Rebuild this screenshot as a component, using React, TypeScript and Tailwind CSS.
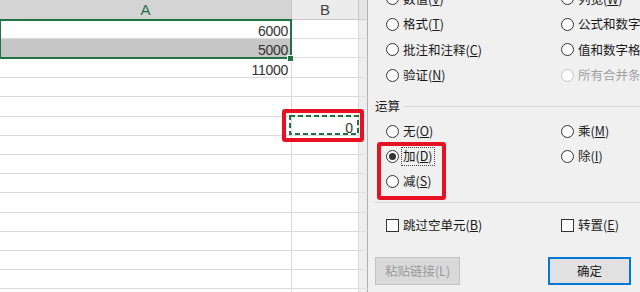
import React from "react";

const rowHeights = [19, 19, 20, 19, 20, 19, 19, 19, 19, 20, 19, 19, 19, 19, 6];

function Label({ text, k, disabled }: { text: string; k: string; disabled?: boolean }) {
  return (
    <span className={disabled ? "text-[#a0a0a0]" : "text-[#1a1a1a]"}>
      {text}(<span className="underline underline-offset-[1px]">{k}</span>)
    </span>
  );
}

function Radio({
  text,
  k,
  checked,
  disabled,
  focus,
}: {
  text: string;
  k: string;
  checked?: boolean;
  disabled?: boolean;
  focus?: boolean;
}) {
  return (
    <div className="flex items-center whitespace-nowrap">
      <div
        className={
          "w-[13px] h-[13px] shrink-0 rounded-full border bg-white flex items-center justify-center " +
          (disabled ? "border-[#c4c4c4]" : "border-[#333333]")
        }
      >
        {checked ? <div className="w-[7px] h-[7px] rounded-full bg-[#333333]" /> : null}
      </div>
      {focus ? (
        <span className="ml-[2px] border border-dotted border-[#444] px-[1px] py-[2px] leading-none">
          <Label text={text} k={k} disabled={disabled} />
        </span>
      ) : (
        <span className="ml-[4px] leading-none">
          <Label text={text} k={k} disabled={disabled} />
        </span>
      )}
    </div>
  );
}

function Check({ text, k }: { text: string; k: string }) {
  return (
    <div className="flex items-center whitespace-nowrap">
      <div className="w-[13px] h-[13px] shrink-0 border border-[#333333] bg-white" />
      <span className="ml-[4px] leading-none">
        <Label text={text} k={k} />
      </span>
    </div>
  );
}

export default function App() {
  return (
    <div className="w-[640px] h-[292px] overflow-hidden flex bg-white">
      {/* Spreadsheet */}
      <div className="relative w-[368px] shrink-0 flex flex-col font-['Liberation_Sans',sans-serif] text-[#333]">
        <div className="flex h-[20px] shrink-0">
          <div className="w-[292px] border-r border-b border-[#c4c4c4] bg-[#d4d4d4] flex items-center justify-center text-[15px] leading-none text-[#217346]">
            A
          </div>
          <div className="w-[67px] border-r border-b border-[#c8c8c8] bg-[#ececec] flex items-center justify-center text-[15px] leading-none text-[#444]">
            B
          </div>
          <div className="w-[9px] border-r border-b border-r-[#b0b0b0] border-b-[#cfcfcf] bg-[#e4e4e4]" />
        </div>
        {rowHeights.map((h, i) => (
          <div key={i} className="flex shrink-0" style={{ height: h }}>
            <div
              className={
                "w-[292px] border-r border-b border-[#dadada] flex items-end justify-end pr-[3px] text-[14px] leading-[14px] tracking-[-0.3px] " +
                (i === 1 ? "bg-[#c6c6c6]" : "bg-white")
              }
            >
              {i === 0 ? "6000" : i === 1 ? "5000" : i === 2 ? "11000" : ""}
            </div>
            <div className="w-[67px] border-r border-b border-[#dadada] flex items-end justify-end pr-[5px] text-[14px] leading-[14px]">
              {i === 5 ? "0" : ""}
            </div>
            <div className="w-[9px] border-r border-b border-r-[#b0b0b0] border-b-[#e0e0e0] bg-[#eeeeee]" />
          </div>
        ))}

        {/* selection */}
        <div className="absolute left-[-1px] top-[19px] w-[293px] h-[40px] border-2 border-[#217346]" />
        <div className="absolute left-[287px] top-[55px] w-[7px] h-[7px] bg-[#217346] border border-white" />

        {/* marching ants */}
        <svg className="absolute left-[289px] top-[115px]" width="70" height="20" viewBox="0 0 70 20">
          <rect x="1" y="1" width="68" height="18" fill="none" stroke="#217346" strokeWidth="2" strokeDasharray="5 3" />
        </svg>

        {/* red highlight */}
        <div className="absolute left-[282px] top-[109px] w-[82px] h-[33px] border-4 border-[#e81123] rounded-[3px]" />
      </div>

      {/* Dialog */}
      <div className="relative flex-1 bg-[#f0f0f0] flex flex-col pl-[7px] font-['Noto_Sans_CJK_SC',sans-serif] text-[12.5px] text-[#1a1a1a]">
        <div className="mt-[-14px] ml-[11px] grid grid-cols-[175px_1fr] auto-rows-[25.5px]">
          <Radio text="数值" k="V" />
          <Radio text="列宽" k="W" />
          <Radio text="格式" k="T" />
          <Radio text="公式和数字格式" k="R" />
          <Radio text="批注和注释" k="C" />
          <Radio text="值和数字格式" k="U" />
          <Radio text="验证" k="N" />
          <Radio text="所有合并条件格式" k="G" disabled />
        </div>

        <div className="h-[31px] pt-[5px] flex items-center">
          <span className="leading-none whitespace-nowrap">运算</span>
          <div className="flex-1 h-px bg-[#d6d6d6] ml-[4px]" />
        </div>

        <div className="ml-[11px] grid grid-cols-[175px_1fr] auto-rows-[25px]">
          <Radio text="无" k="O" />
          <Radio text="乘" k="M" />
          <Radio text="加" k="D" checked focus />
          <Radio text="除" k="I" />
          <Radio text="减" k="S" />
          <div />
        </div>

        <div className="mt-[8px] h-px bg-[#d6d6d6]" />

        <div className="mt-[9px] h-[26px] ml-[11px] grid grid-cols-[175px_1fr]">
          <Check text="跳过空单元" k="B" />
          <Check text="转置" k="E" />
        </div>

        <div className="mt-[19px] flex">
          <div className="w-[85px] h-[28px] shrink-0 border border-[#c2c2c2] bg-[#d9d9d9] flex items-center justify-center text-[#9a9a9a] leading-none whitespace-nowrap">
            粘贴链接(L)
          </div>
          <div className="ml-[88px] w-[83px] h-[28px] shrink-0 border-2 border-[#0078d7] bg-[#e1e1e1] flex items-center justify-center leading-none">
            确定
          </div>
        </div>

        {/* red highlight */}
        <div className="absolute left-[9px] top-[142px] w-[69px] h-[58px] border-4 border-[#e81123] rounded-[3px]" />
      </div>
    </div>
  );
}
